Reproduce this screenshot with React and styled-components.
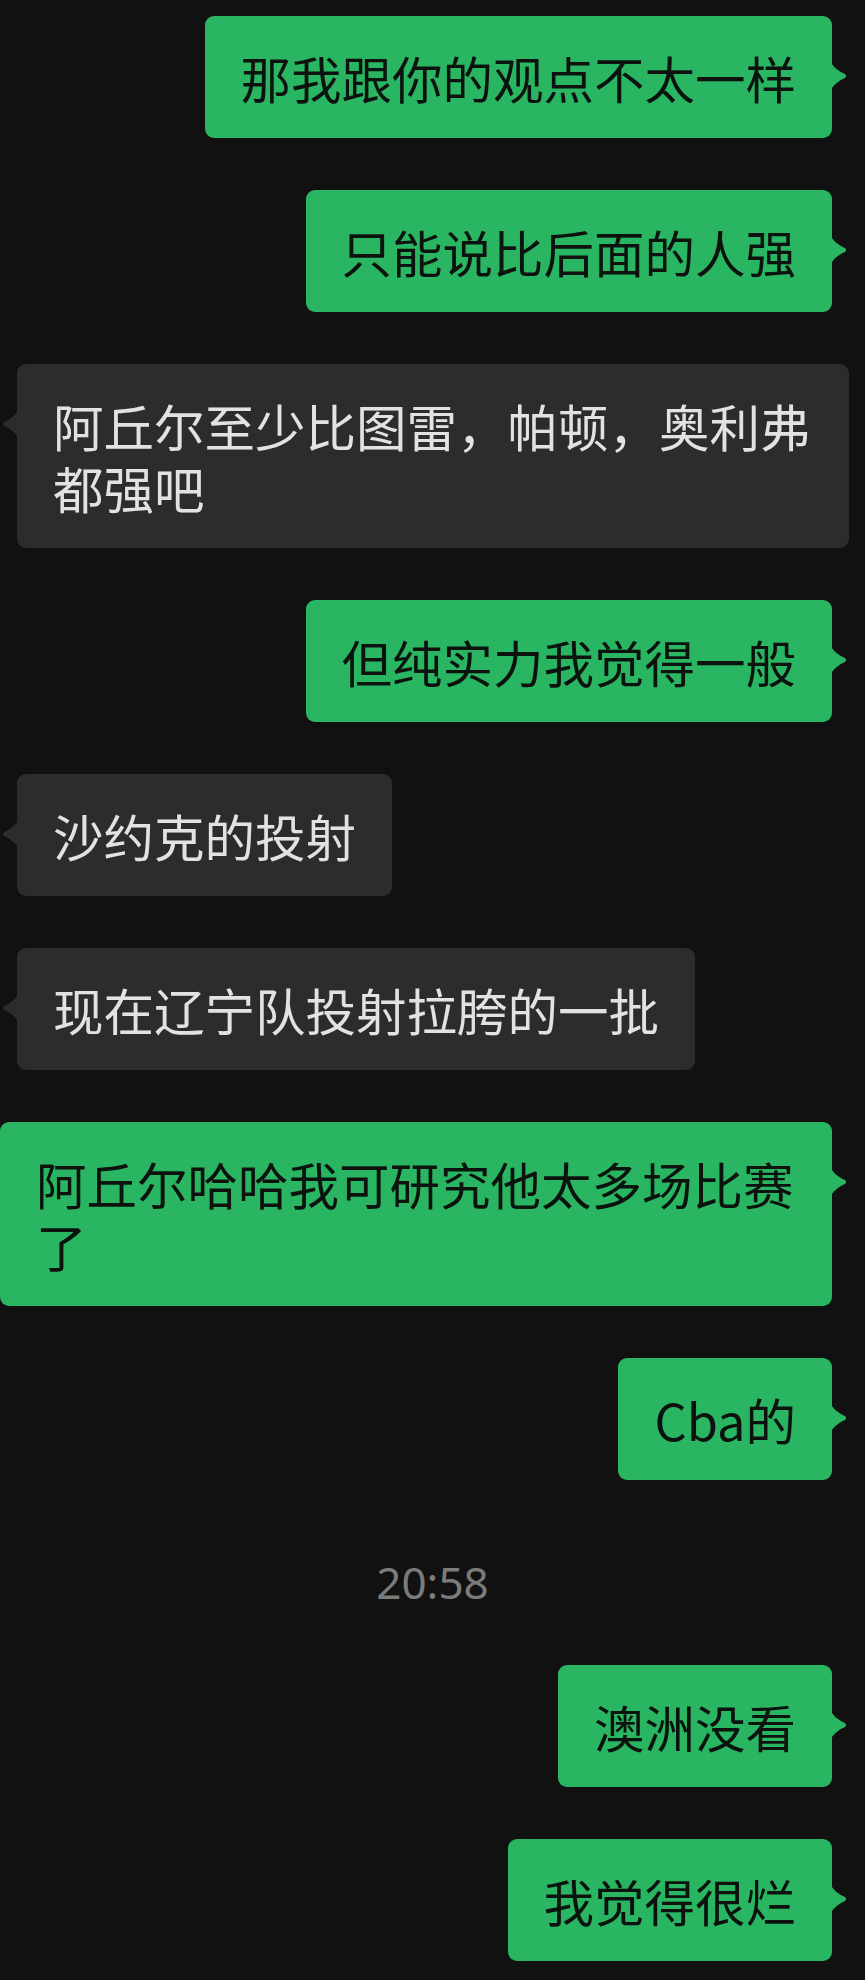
import React from 'react';
import styled, { createGlobalStyle } from 'styled-components';

const messages = [
  { side: 'right', text: '那我跟你的观点不太一样' },
  { side: 'right', text: '只能说比后面的人强' },
  { side: 'left', text: '阿丘尔至少比图雷，帕顿，奥利弗都强吧' },
  { side: 'right', text: '但纯实力我觉得一般' },
  { side: 'left', text: '沙约克的投射' },
  { side: 'left', text: '现在辽宁队投射拉胯的一批' },
  { side: 'right', text: '阿丘尔哈哈我可研究他太多场比赛了' },
  { side: 'right', text: 'Cba的' },
  { time: '20:58' },
  { side: 'right', text: '澳洲没看' },
  { side: 'right', text: '我觉得很烂' },
];

function Tail({ side }) {
  return (
    <TailSvg $side={side} width="17" height="32" viewBox="0 0 17 32">
      {side === 'right' ? (
        <path d="M0 0 C2 6 8 11 15 14 Q17 16 15 18 C8 21 2 26 0 32 Z" />
      ) : (
        <path d="M17 0 C15 6 9 11 2 14 Q0 16 2 18 C9 21 15 26 17 32 Z" />
      )}
    </TailSvg>
  );
}

function App() {
  return (
    <>
      <GlobalStyle />
      <ChatContainer>
        {messages.map((m, i) =>
          m.time ? (
            <TimeStamp key={i}>{m.time}</TimeStamp>
          ) : (
            <Row key={i} $side={m.side}>
              <Bubble $side={m.side}>
                {m.text}
                <Tail side={m.side} />
              </Bubble>
            </Row>
          )
        )}
      </ChatContainer>
    </>
  );
}

export default App;

const GlobalStyle = createGlobalStyle`
    html, body {
        margin: 0;
        padding: 0;
        background-color: #111111;
    }
    body {
        font-family: "Noto Sans CJK SC", "Noto Sans", sans-serif;
    }
`;

const ChatContainer = styled.div`
    display: flex;
    flex-direction: column;
    gap: 52px;
    width: 865px;
    min-height: 1980px;
    box-sizing: border-box;
    padding-top: 16px;
    background-color: #111111;
`;

const Row = styled.div`
    display: flex;
    justify-content: ${(p) => (p.$side === 'right' ? 'flex-end' : 'flex-start')};
    padding: ${(p) => (p.$side === 'right' ? '0 33px 0 0' : '0 0 0 17px')};
`;

const Bubble = styled.div`
    position: relative;
    box-sizing: border-box;
    max-width: 832px;
    padding: 30px 36px;
    border-radius: 9px;
    font-size: 50.5px;
    line-height: 62px;
    font-weight: 400;
    background-color: ${(p) => (p.$side === 'right' ? '#29b562' : '#2c2c2c')};
    color: ${(p) => (p.$side === 'right' ? '#0c130e' : '#e2e2e2')};
`;

const TailSvg = styled.svg`
    position: absolute;
    top: 44px;
    ${(p) => (p.$side === 'right' ? 'right: -15px;' : 'left: -15px;')}
    fill: ${(p) => (p.$side === 'right' ? '#29b562' : '#2c2c2c')};
`;

const TimeStamp = styled.div`
    height: 81px;
    box-sizing: border-box;
    padding-top: 20px;
    text-align: center;
    font-family: "Noto Sans", "Liberation Sans", sans-serif;
    font-size: 44px;
    line-height: 61px;
    color: #7b7b7b;
`;
